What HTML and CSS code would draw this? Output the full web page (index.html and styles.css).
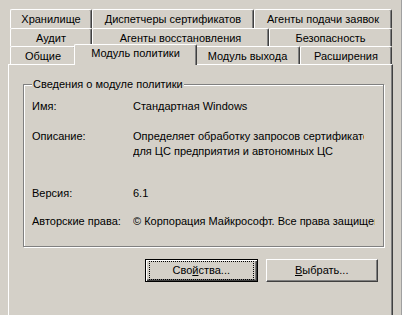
FILE: index.html
```html
<!DOCTYPE html>
<html lang="ru">
<head>
  <meta charset="UTF-8">
  <title>Свойства центра сертификации</title>
  <link rel="stylesheet" href="styles.css">
</head>
<body>
  <div class="dialog">
    <!-- Tab rows -->
    <div class="tab-row row-top">
      <div class="tab w82">Хранилище</div>
      <div class="tab w162">Диспетчеры сертификатов</div>
      <div class="tab w138">Агенты подачи заявок</div>
    </div>
    <div class="tab-row row-mid">
      <div class="tab w82">Аудит</div>
      <div class="tab w177">Агенты восстановления</div>
      <div class="tab w123">Безопасность</div>
    </div>
    <div class="tab-row row-bottom">
      <div class="tab w66">Общие</div>
      <div class="tab w119 selected">Модуль политики</div>
      <div class="tab w105">Модуль выхода</div>
      <div class="tab w92">Расширения</div>
    </div>

    <!-- Tab page -->
    <div class="panel">
      <fieldset class="group">
        <legend>Сведения о модуле политики</legend>
        <div class="info">
          <div class="info-label">Имя:</div>
          <div class="info-value">Стандартная Windows</div>

          <div class="info-label gap-desc">Описание:</div>
          <div class="info-value gap-desc desc">
            <div>Определяет обработку запросов сертификатов</div>
            <div>для ЦС предприятия и автономных ЦС</div>
          </div>

          <div class="info-label gap-ver">Версия:</div>
          <div class="info-value gap-ver">6.1</div>

          <div class="info-label gap-copy">Авторские права:</div>
          <div class="info-value gap-copy copy">© Корпорация Майкрософт. Все права защищены.</div>
        </div>
      </fieldset>

      <div class="buttons">
        <button type="button" class="btn default"><span class="focus">Сво<u>й</u>ства...</span></button>
        <button type="button" class="btn"><span><u>В</u>ыбрать...</span></button>
      </div>
    </div>
  </div>
</body>
</html>
```

FILE: styles.css
```css
body {
  margin: 0;
  background-color: #d4d0c8;
  font-family: "Liberation Sans", Arial, sans-serif;
  font-size: 11px;
  color: #000;
}
.dialog {
  height: 315px;
  overflow: hidden;
  border-right: 1px solid #a0a0a0;
}
.tab-row {
  display: flex;
  margin-left: 10px;
  width: 382px;
}
.row-top {
  margin-top: 9px;
  height: 19px;
}
.row-mid {
  height: 18px;
}
.row-bottom {
  height: 18px;
}
.tab {
  box-sizing: border-box;
  height: 100%;
  padding-top: 3px;
  line-height: 13px;
  text-align: center;
  white-space: nowrap;
  overflow: hidden;
  background-color: #d4d0c8;
  border-top: 1px solid #fff;
  border-left: 1px solid #fff;
  border-right: 1px solid #404040;
  box-shadow: inset -1px 0 0 #808080;
  border-radius: 2px 2px 0 0;
}
.tab.selected {
  height: 21px;
  margin: -2px -2px -1px;
  padding-top: 2px;
  z-index: 1;
}
.w66 { width: 66px; }
.w82 { width: 82px; }
.w92 { width: 92px; }
.w105 { width: 105px; }
.w119 { width: 119px; }
.tab.selected.w119 { width: 123px; }
.w123 { width: 123px; }
.w138 { width: 138px; }
.w162 { width: 162px; }
.w177 { width: 177px; }

.panel {
  margin-left: 8px;
  width: 385px;
  height: 260px;
  box-sizing: border-box;
  border-top: 1px solid #fff;
  border-left: 1px solid #fff;
  border-right: 1px solid #404040;
  box-shadow: inset -1px 0 0 #808080;
  padding: 13px 14px 0 14px;
}
.group {
  margin: 0;
  padding: 8px 8px 0 8px;
  height: 169px;
  box-sizing: border-box;
  border: 1px solid #808080;
  box-shadow: inset 1px 1px 0 #fff, 1px 1px 0 #fff;
  width: 355px;
}
.group legend {
  padding: 0 1px;
  margin-left: 0;
  line-height: 13px;
  background-color: #d4d0c8;
}
.info {
  display: grid;
  grid-template-columns: 101px 1fr;
  line-height: 15px;
}
.info-value {
  white-space: nowrap;
  overflow: hidden;
}
.gap-desc { margin-top: 15px; }
.gap-ver { margin-top: 27px; }
.gap-copy { margin-top: 13px; }
.desc { width: 231px; }
.copy { width: 242px; }

.buttons {
  display: flex;
  gap: 8px;
  margin-top: 12px;
  margin-left: 122px;
}
.btn {
  width: 113px;
  height: 23px;
  padding: 0;
  box-sizing: border-box;
  font-family: "Liberation Sans", Arial, sans-serif;
  font-size: 11px;
  color: #000;
  background-color: #d4d0c8;
  border: 1px solid;
  border-color: #fff #404040 #404040 #fff;
  box-shadow: inset -1px -1px 0 #808080;
  border-radius: 0;
}
.btn.default {
  border: 1px solid #000;
  box-shadow: inset 1px 1px 0 #fff, inset -1px -1px 0 #404040, inset -2px -2px 0 #808080;
}
.btn span {
  display: block;
  line-height: 13px;
}
.btn .focus {
  margin: 0 3px;
  padding: 2px 0;
  border: 1px dotted #000;
}
```
